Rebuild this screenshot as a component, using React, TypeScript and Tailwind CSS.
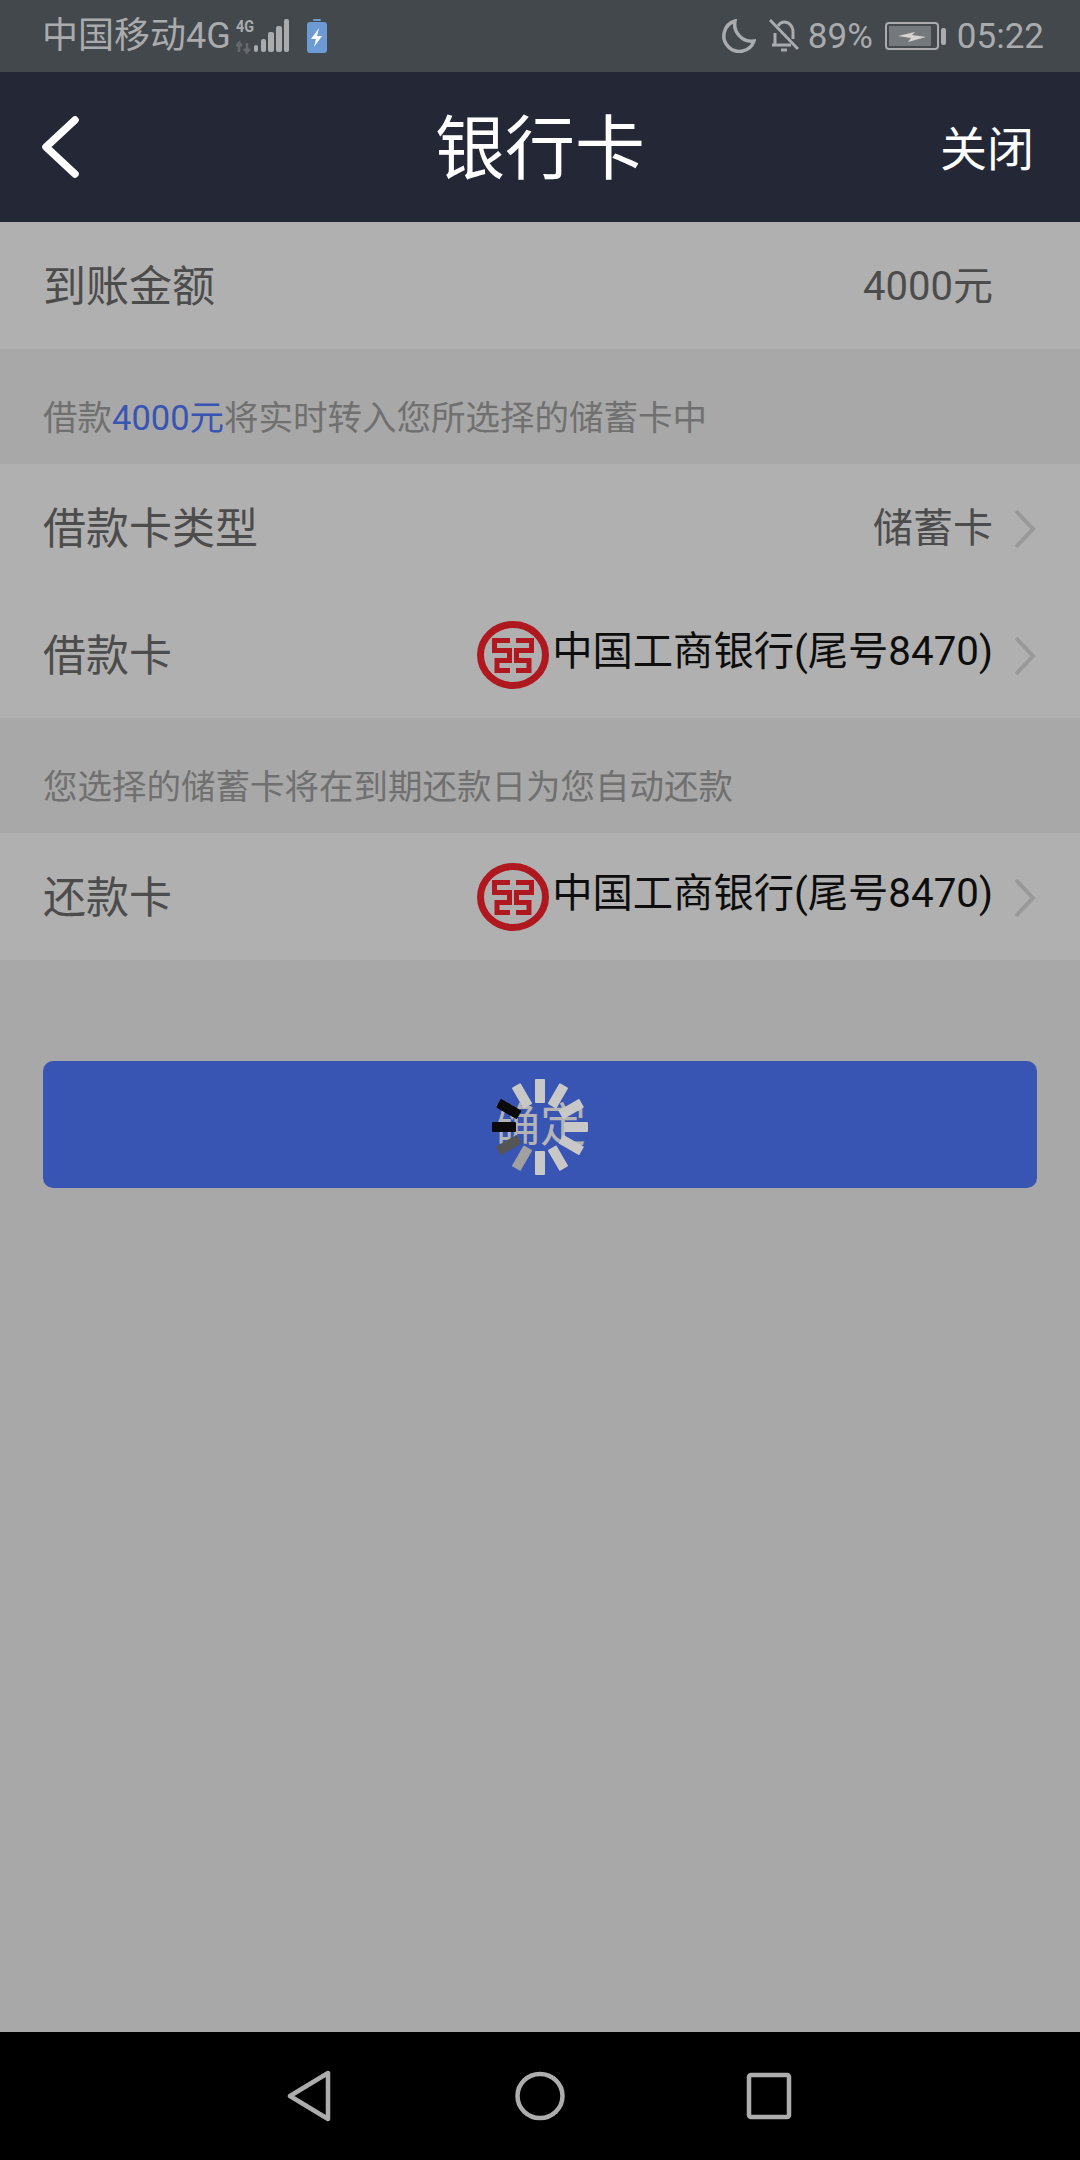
const font = { fontFamily: 'Roboto, "Noto Sans CJK SC", sans-serif' };

function IcbcLogo() {
  return (
    <svg width="72" height="68" viewBox="0 0 72 68" className="shrink-0">
      <ellipse cx="36" cy="34" rx="32.500" ry="30.500" fill="none" stroke="#b0181f" strokeWidth="7" />
      <path
        d="M33 19.500H17.500V29.500H32.500V39.500H20V49.500H33M39 19.500H54.500V29.500H39.500V39.500H52V49.500H39"
        fill="none"
        stroke="#b0181f"
        strokeWidth="5"
      />
    </svg>
  );
}

function Chevron() {
  return (
    <svg width="24" height="42" viewBox="0 0 24 42" className="mt-[2px] shrink-0">
      <path d="M3 3L20 21L3 39" fill="none" stroke="#999999" strokeWidth="4" />
    </svg>
  );
}

function Row({ label, children, chevronGap = true }: { label: string; children: React.ReactNode; chevronGap?: boolean }) {
  return (
    <div className="flex h-[127px] items-center justify-between pl-[43px] pr-[43px]">
      <span className="pt-[3px] text-[43px] leading-none text-[#4c4c4c]">{label}</span>
      <div className="flex items-center">
        {children}
        {chevronGap ? <span className="ml-[20px]"><Chevron /></span> : <span className="w-[44px]" />}
      </div>
    </div>
  );
}

function BankValue() {
  return (
    <div className="flex items-center">
      <IcbcLogo />
      <span className="-mt-[4px] ml-[3px] text-[40.300px] leading-none text-[#0d0d0d]">中国工商银行(尾号8470)</span>
    </div>
  );
}

function Spinner() {
  const spokes = Array.from({ length: 12 }, (_, i) => i);
  const colors = ["#c8c8c8", "#c8c8c8", "#c8c8c8", "#c8c8c8", "#c8c8c8", "#c8c8c8", "#c8c8c8", "#a0a0a0", "#555555", "#0a0a0a", "#0a0a0a", "#c8c8c8"];
  return (
    <svg width="100" height="100" viewBox="-50 -50 100 100" className="absolute left-1/2 top-[52%] -translate-x-1/2 -translate-y-1/2">
      {spokes.map((i) => (
        <rect key={i} x="-5" y="-48" width="10" height="24" rx="1" fill={colors[i]} transform={`rotate(${i * 30})`} />
      ))}
    </svg>
  );
}

export default function App() {
  return (
    <div className="flex h-[2160px] w-[1080px] flex-col overflow-hidden bg-[#a8a8a8]" style={font}>
      <div className="flex h-[72px] items-center justify-between bg-[#43484c] pl-[42px] pr-[36px] text-[#a9abad]">
        <div className="flex items-center">
          <span className="text-[36px] leading-[44px]">中国移动4G</span>
          <svg width="54" height="42" viewBox="0 -3 54 42" className="ml-[5px]">
            <text x="0" y="14" fontSize="17" fontWeight="700" textLength="18" lengthAdjust="spacingAndGlyphs" fill="#a9abad">4G</text>
            <path d="M3 34V25L0 28M3 25L6 28M11 25V34L14 31M11 34L8 31" fill="none" stroke="#66696c" strokeWidth="2.500" />
            <rect x="18" y="27" width="4" height="7" rx="2" fill="#a9abad" />
            <rect x="25" y="21" width="5" height="13" rx="2" fill="#a9abad" />
            <rect x="32" y="14" width="6" height="20" rx="2" fill="#a9abad" />
            <rect x="40" y="8" width="6" height="26" rx="2" fill="#a9abad" />
            <rect x="48" y="1" width="5" height="33" rx="2" fill="#a9abad" />
          </svg>
          <svg width="20" height="34" viewBox="0 0 20 34" className="ml-[17px]">
            <rect x="6" y="0" width="8" height="2" rx="1" fill="#6b9bd2" />
            <rect x="0" y="3" width="20" height="31" rx="3" fill="#6b9bd2" />
            <path d="M12 9L4 20H9L7 28L15 17H10Z" fill="#ffffff" />
          </svg>
        </div>
        <div className="flex items-center">
          <svg width="34" height="34" viewBox="0 0 34 34">
            <path d="M13 2A15.500 15.500 0 1 0 32 22A17 17 0 0 1 13 2Z" fill="none" stroke="#a9abad" strokeWidth="3.500" />
          </svg>
          <svg width="30" height="34" viewBox="0 0 30 34" className="ml-[13px]">
            <path d="M6 25V14M9 7C11 4 13 3 15 3C20 3 24 7 24 13V20M3 26H22" fill="none" stroke="#a9abad" strokeWidth="3" />
            <path d="M1 1L29 30" stroke="#a9abad" strokeWidth="3" />
            <path d="M12 31H18" stroke="#a9abad" strokeWidth="3" />
          </svg>
          <span className="ml-[9px] text-[35px] leading-none">89%</span>
          <svg width="62" height="28" viewBox="0 0 62 28" className="ml-[12px]">
            <rect x="1" y="1" width="52" height="26" rx="3" fill="none" stroke="#a9abad" strokeWidth="2" />
            <rect x="4" y="4" width="42" height="20" fill="#76797c" />
            <rect x="56" y="6" width="5" height="17" rx="2" fill="#a9abad" />
            <path d="M13 14L30 10L27 13L41 15L23 20L26 16Z" fill="#d4d4d4" />
          </svg>
          <span className="ml-[10px] text-[35px] leading-none">05:22</span>
        </div>
      </div>

      <div className="relative flex h-[150px] items-center justify-center bg-[#232736]">
        <svg width="40" height="64" viewBox="0 0 40 64" className="absolute left-[40px] top-[43px]">
          <path d="M35 5L6 32L35 59" fill="none" stroke="#ffffff" strokeWidth="7.500" strokeLinecap="round" strokeLinejoin="round" />
        </svg>
        <span className="pt-[6px] text-[70px] leading-none text-white">银行卡</span>
        <span className="absolute right-[46px] top-[51%] -translate-y-1/2 text-[47px] leading-none text-white">关闭</span>
      </div>

      <div className="bg-[#b0b0b0]">
        <Row label="到账金额" chevronGap={false}>
          <span className="pt-[2px] text-[40px] leading-none text-[#4c4c4c]">4000元</span>
        </Row>
      </div>

      <div className="flex h-[115px] items-center pl-[43px] pt-[23px] text-[34.500px] leading-none text-[#707070]">
        <span>借款</span>
        <span className="text-[#3855b3]">4000元</span>
        <span>将实时转入您所选择的储蓄卡中</span>
      </div>

      <div className="bg-[#b0b0b0]">
        <Row label="借款卡类型">
          <span className="pt-[2px] text-[40px] leading-none text-[#4c4c4c]">储蓄卡</span>
        </Row>
        <Row label="借款卡">
          <BankValue />
        </Row>
      </div>

      <div className="flex h-[115px] items-center pl-[43px] pt-[23px] text-[34.500px] leading-none text-[#707070]">
        您选择的储蓄卡将在到期还款日为您自动还款
      </div>

      <div className="bg-[#b0b0b0]">
        <Row label="还款卡">
          <BankValue />
        </Row>
      </div>

      <div className="mt-[101px] px-[43px]">
        <div className="relative flex h-[127px] items-center justify-center rounded-[10px] bg-[#3855b3] text-[46px] leading-none text-[#b4b4b4]">
          确定
          <Spinner />
        </div>
      </div>

      <div className="mt-auto flex h-[128px] items-center bg-black pl-[286px]">
        <svg width="46" height="52" viewBox="0 0 46 52">
          <path d="M4 26L42 3V49Z" fill="none" stroke="#adadad" strokeWidth="4.500" strokeLinejoin="round" />
        </svg>
        <svg width="52" height="52" viewBox="0 0 52 52" className="ml-[182px]">
          <ellipse cx="26" cy="26" rx="22.500" ry="22" fill="none" stroke="#adadad" strokeWidth="4.500" />
        </svg>
        <svg width="48" height="48" viewBox="0 0 48 48" className="ml-[179px]">
          <rect x="4" y="3" width="40" height="42" rx="2" fill="none" stroke="#adadad" strokeWidth="4.500" />
        </svg>
      </div>
    </div>
  );
}
